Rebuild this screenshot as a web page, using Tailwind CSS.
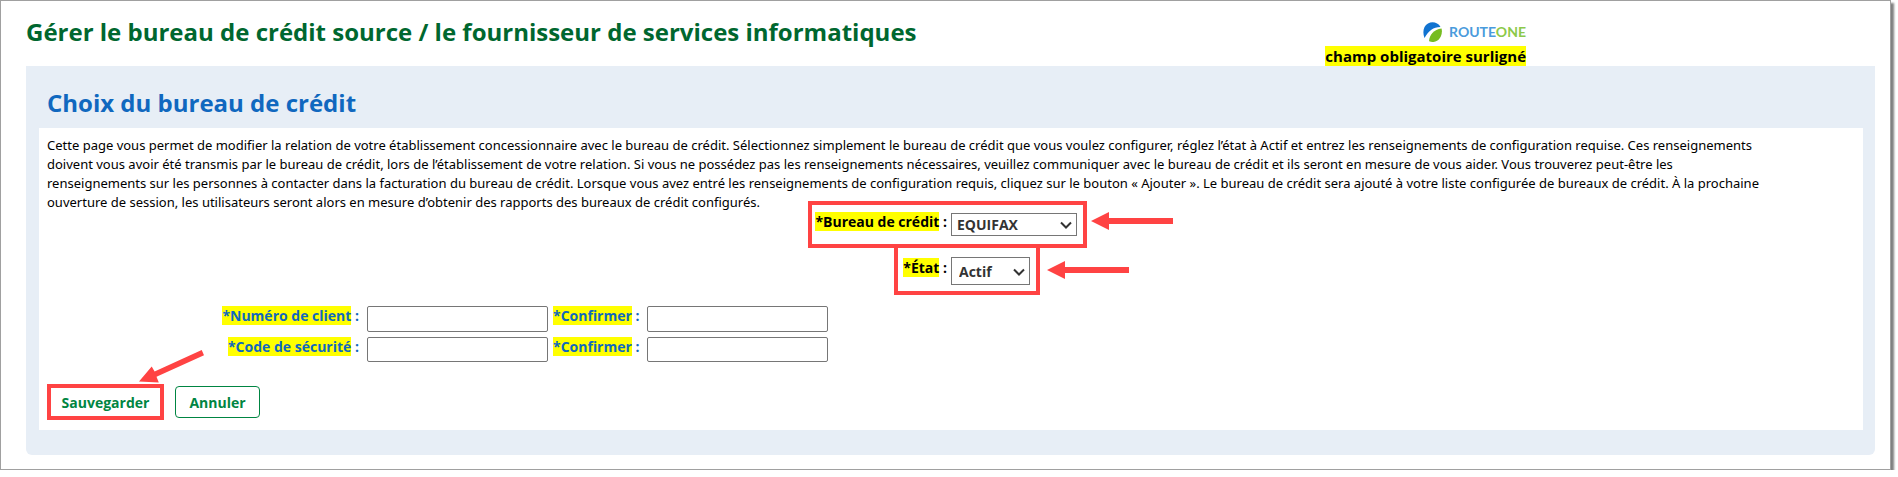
<!DOCTYPE html>
<html lang="fr">
<head>
    <meta charset="UTF-8">
    <meta name="viewport" content="width=device-width, initial-scale=1.0">
    <title>Gérer le bureau de crédit source</title>
    <script src="https://cdn.jsdelivr.net/npm/@tailwindcss/browser@4"></script>
    <style>
        body {
            font-family: 'Open Sans', 'Noto Sans', sans-serif;
        }
    </style>
</head>
<body class="bg-white text-black text-sm leading-[19px]">
    <div class="mr-[7px] border border-[#a0a0a0] shadow-[3px_3px_2px_0px_#808080] pl-[25px] pr-[15px] pb-[14px]">
        <header class="flex h-[65px]">
            <h1 class="flex-1 pt-[14px] text-2xl leading-[33px] font-bold text-[#00672f]">Gérer le bureau de crédit source / le fournisseur de services informatiques</h1>
            <div class="mr-[349px] pt-5 flex flex-col items-end">
                <div class="flex items-center gap-[6px] h-[25px] pb-1 text-sm font-bold text-[#4a9bdc]">
                    <svg class="w-5 h-5" viewBox="0 0 20 20" aria-hidden="true">
                        <path d="M1.5 16C-.8 10 .5 4 5 1.5C9 -.8 15 .2 17.500 5C10 5 6 8.500 1.500 16Z" fill="#1173d0"/>
                        <path d="M6 19C6.500 13 11 7.200 18.500 6.500C20 12 17 19 10.500 20C8 20.200 6 19 6 19Z" fill="#76bc21"/>
                    </svg>
                    <span class="font-['Lato']">ROUTE<span class="text-[#8cc94a]">ONE</span></span>
                </div>
                <strong class="bg-[#ffff00] text-[15px] leading-5">champ obligatoire surligné</strong>
            </div>
        </header>

        <main class="rounded-b-md bg-[#e7eef6] pl-[13px] pr-3 pb-[25px]">
            <h2 class="h-[62px] pl-2 pt-5 text-2xl leading-[33px] font-bold text-[#1068bf]">Choix du bureau de crédit</h2>

            <form class="bg-white pt-2 pb-3">
                <p class="px-2 font-['Noto_Sans'] text-[13px] leading-[19px]">
                    Cette page vous permet de modifier la relation de votre établissement concessionnaire avec le bureau de crédit. Sélectionnez simplement le bureau de crédit que vous voulez configurer, réglez l’état à Actif et entrez les renseignements de configuration requise. Ces renseignements<br>
                    doivent vous avoir été transmis par le bureau de crédit, lors de l’établissement de votre relation. Si vous ne possédez pas les renseignements nécessaires, veuillez communiquer avec le bureau de crédit et ils seront en mesure de vous aider. Vous trouverez peut-être les<br>
                    renseignements sur les personnes à contacter dans la facturation du bureau de crédit. Lorsque vous avez entré les renseignements de configuration requis, cliquez sur le bouton « Ajouter ». Le bureau de crédit sera ajouté à votre liste configurée de bureaux de crédit. À la prochaine<br>
                    ouverture de session, les utilisateurs seront alors en mesure d’obtenir des rapports des bureaux de crédit configurés.
                </p>

                <div class="grid grid-cols-2 font-bold">
                    <div class="h-[46px] text-right pr-1">
                        <label for="bureau"><span class="bg-[#ffff00]">*Bureau de crédit</span> :</label>
                    </div>
                    <div class="relative pt-px">
                        <div class="relative w-[126px]">
                            <select id="bureau" class="block w-full h-[23px] appearance-none border border-[#767676] pl-[5px] text-[#333] bg-white">
                                <option>EQUIFAX</option>
                            </select>
                            <svg class="absolute right-[5px] top-2 w-3 h-2 pointer-events-none" viewBox="0 0 12 8" fill="none" stroke="#333" stroke-width="2"><path d="M1 1.500L6 6.500L11 1.500"/></svg>
                        </div>
                        <!-- repère rouge -->
                        <div class="absolute -left-[143px] -top-[11px] w-[279px] h-[47px] border-4 border-[#ff4343] pointer-events-none"></div>
                        <svg class="absolute left-[140px] top-0 w-[82px] h-[18px]" viewBox="0 0 82 18" fill="#ff4343"><path d="M0 9L18 0V6H82V12H18V18Z"/></svg>
                    </div>

                    <div class="h-[48px] text-right pr-1">
                        <label for="etat"><span class="bg-[#ffff00]">*État</span> :</label>
                    </div>
                    <div class="relative">
                        <div class="relative w-[79px] -mt-px">
                            <select id="etat" class="block w-full h-7 appearance-none border border-[#767676] pl-[7px] text-[#333] bg-white">
                                <option>Actif</option>
                            </select>
                            <svg class="absolute right-[5px] top-[11px] w-3 h-2 pointer-events-none" viewBox="0 0 12 8" fill="none" stroke="#333" stroke-width="2"><path d="M1 1.500L6 6.500L11 1.500"/></svg>
                        </div>
                        <div class="absolute -left-[57px] -top-[14px] w-[146px] h-[51px] border-4 border-[#ff4343] pointer-events-none"></div>
                        <svg class="absolute left-24 top-[3px] w-[82px] h-[18px]" viewBox="0 0 82 18" fill="#ff4343"><path d="M0 9L18 0V6H82V12H18V18Z"/></svg>
                    </div>
                </div>

                <div class="grid grid-cols-[320px_194px_86px_181px] gap-y-[5px] font-bold text-[#1068bf]">
                    <label for="client" class="text-right"><span class="bg-[#ffff00]">*Numéro de client</span> :</label>
                    <input id="client" type="text" class="ml-2 h-[26px] w-[181px] border border-[#767676] rounded-xs px-1">
                    <label for="client2" class="whitespace-nowrap"><span class="bg-[#ffff00]">*Confirmer</span> :</label>
                    <input id="client2" type="text" class="ml-2 h-[26px] w-[181px] border border-[#767676] rounded-xs px-1">

                    <label for="code" class="text-right"><span class="bg-[#ffff00]">*Code de sécurité</span> :</label>
                    <input id="code" type="text" class="ml-2 h-[25px] w-[181px] border border-[#767676] rounded-xs px-1">
                    <label for="code2" class="whitespace-nowrap"><span class="bg-[#ffff00]">*Confirmer</span> :</label>
                    <input id="code2" type="text" class="ml-2 h-[25px] w-[181px] border border-[#767676] rounded-xs px-1">
                </div>

                <div class="relative mt-6 ml-[9px] flex gap-3 font-bold text-[#008542]">
                    <button type="submit" class="h-8 w-[115px] rounded">Sauvegarder</button>
                    <button type="button" class="h-8 w-[85px] rounded border border-[#008542]">Annuler</button>
                    <div class="absolute -left-px -top-[2px] w-[117px] h-9 border-4 border-[#ff4343] pointer-events-none"></div>
                    <svg class="absolute left-[91px] -top-9 w-[66px] h-[34px]" viewBox="0 0 66 34" fill="#ff4343"><path d="M0 31.500L12.700 16.500L15.600 21.500L62.700 0L65 5.200L17.500 26.800L19.800 32.500Z"/></svg>
                </div>
            </form>
        </main>
    </div>
</body>
</html>
